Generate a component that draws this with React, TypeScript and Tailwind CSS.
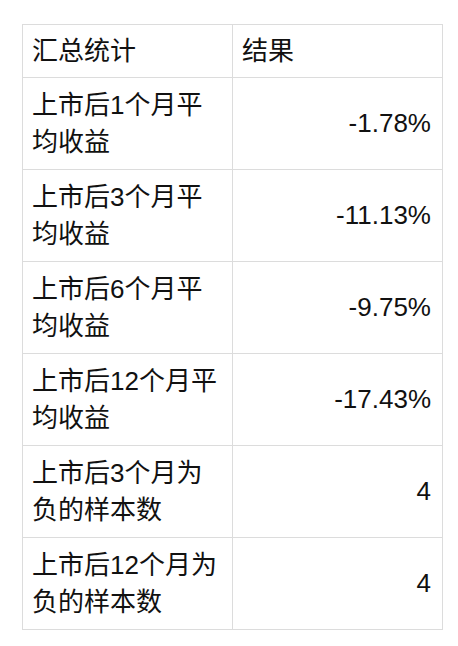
import React from "react";

const rows: { label: string[]; value: string }[] = [
  { label: ["上市后1个月平", "均收益"], value: "-1.78%" },
  { label: ["上市后3个月平", "均收益"], value: "-11.13%" },
  { label: ["上市后6个月平", "均收益"], value: "-9.75%" },
  { label: ["上市后12个月平", "均收益"], value: "-17.43%" },
  { label: ["上市后3个月为", "负的样本数"], value: "4" },
  { label: ["上市后12个月为", "负的样本数"], value: "4" },
];

export default function App() {
  return (
    <div
      className="w-[458px] h-[646px] bg-white pl-[22px] pt-[24px] text-[#111111]"
      style={{ fontFamily: '"Liberation Sans", "Noto Sans CJK SC", sans-serif' }}
    >
      <table className="border-collapse border border-[#dcdcdc] table-fixed w-[420px] text-[26px] leading-[37px]">
        <tbody>
          <tr className="h-[53px]">
            <td className="w-[210px] border border-[#dcdcdc] px-[9px] align-middle">汇总统计</td>
            <td className="w-[210px] border border-[#dcdcdc] px-[9px] align-middle">结果</td>
          </tr>
          {rows.map((r, i) => (
            <tr key={i} className="h-[92px]">
              <td className="border border-[#dcdcdc] px-[9px] align-middle whitespace-nowrap">
                {r.label[0]}
                <br />
                {r.label[1]}
              </td>
              <td className="border border-[#dcdcdc] pl-[9px] pr-[11px] text-right align-middle">
                {r.value}
              </td>
            </tr>
          ))}
        </tbody>
      </table>
    </div>
  );
}
